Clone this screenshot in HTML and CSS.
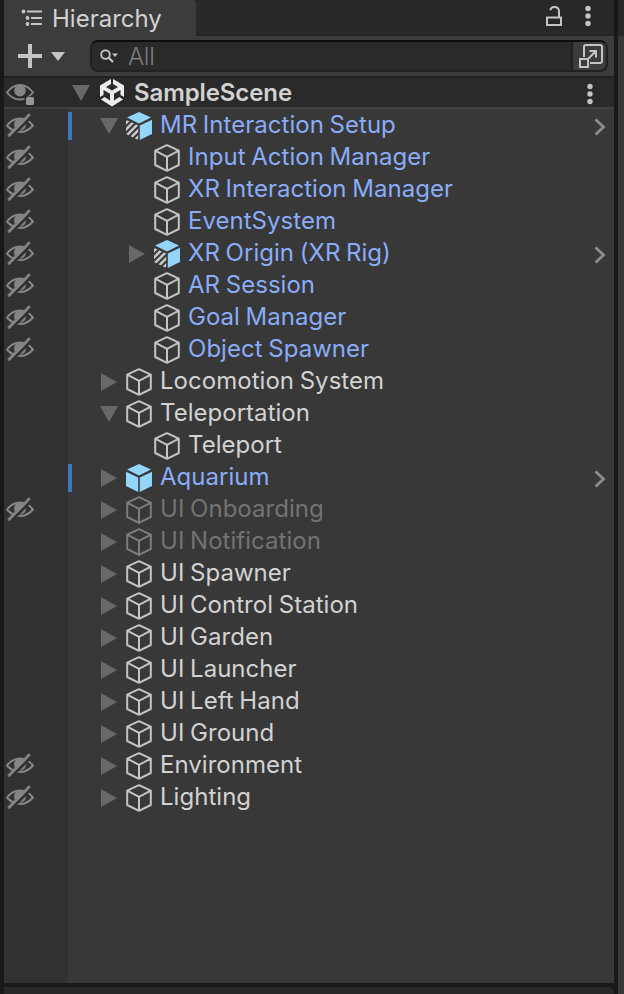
FILE: index.html
```html
<!DOCTYPE html>
<html lang="en">
<head>
<meta charset="utf-8">
<title>Hierarchy</title>
<link rel="stylesheet" href="styles.css">
</head>
<body>
<svg class="defs" aria-hidden="true">
  <symbol id="cube" viewBox="0 0 26 28"><path d="M13 1.2 24.8 6.6V21L13 26.8 1.2 21V6.6zM1.2 6.6 13 12.8 24.8 6.6M13 12.8V26.8" fill="none" stroke="currentColor" stroke-width="2" stroke-linejoin="round"/></symbol>
  <symbol id="prefab" viewBox="0 0 26 28"><path d="M13 0 25 5.5 13 11.4 1 5.5zM0 7.8 12.2 13.6V28L0 22zM26 7.8 13.8 13.6V28L26 22z" fill="#93d5fb"/></symbol>
  <symbol id="variant" viewBox="0 0 26 28"><clipPath id="face"><path d="M0 7.8 12.2 13.6V28L0 22z"/></clipPath><path d="M13 0 25 5.5 13 11.4 1 5.5zM26 7.8 13.8 13.6V28L26 22z" fill="#93d5fb"/><path d="M-2 13 11 0M-2 19.500 18 -.5M-2 26 18 6M-2 32.500 18 12.500M-2 39 18 19" clip-path="url(#face)" fill="none" stroke="#c8c8c8" stroke-width="2.6"/></symbol>
  <symbol id="down" viewBox="0 0 18 16"><path d="M0 0H18L9 16z" fill="#686868"/></symbol>
  <symbol id="right" viewBox="0 0 18 18"><path d="M1 0 17 9 1 18z" fill="#686868"/></symbol>
  <symbol id="hidden" viewBox="0 0 28 24"><path d="M1 12.5Q6.500 5.500 14 5.500T27 12.500Q21.500 19 14 19T1 12.500z" fill="none" stroke="#858585" stroke-width="2"/><circle cx="14" cy="11.500" r="6" fill="#858585"/><path d="M5 24 26 3" stroke="#323232" stroke-width="3"/><path d="M3 22.500 23 2" stroke="#858585" stroke-width="2.700" stroke-linecap="round"/></symbol>
  <symbol id="eye" viewBox="0 0 28 24"><path d="M1 11.500Q6.500 4 14 4T27 11.500Q21.500 18.500 14 18.500T1 11.500z" fill="none" stroke="#858585" stroke-width="1.900"/><circle cx="14" cy="9.700" r="5.800" fill="#858585"/><rect x="18.500" y="15.500" width="10" height="9" fill="#292929"/><rect x="20" y="16" width="8" height="8" rx="1.500" fill="#969696"/></symbol>
  <symbol id="open" viewBox="0 0 12 18"><path d="M1.500 1.500 9.500 9 1.500 16.500" fill="none" stroke="#8d8d8d" stroke-width="2.800"/></symbol>
  <symbol id="dots" viewBox="0 0 6 22"><g fill="#c4c4c4"><circle cx="3" cy="3.500" r="2.700"/><circle cx="3" cy="11" r="2.700"/><circle cx="3" cy="18.500" r="2.700"/></g></symbol>
</svg>
<div class="window">
  <section class="panel">
    <header class="tabs">
      <div class="tab">
        <svg class="list" viewBox="0 0 22 18"><g fill="#c4c4c4"><circle cx="2.500" cy="2.500" r="1.900"/><circle cx="6.500" cy="9" r="1.900"/><circle cx="6.500" cy="15" r="1.900"/><path d="M6 1.500h15v2H6zM10 8h11v2H10zM10 14h11v2H10z"/></g></svg>
        <span>Hierarchy</span>
      </div>
      <svg class="lock" viewBox="0 0 16 20"><path d="M1 11.500H15V19H1zM13 11.500V5.500A4.500 4.500 0 0 0 4.200 4.200" fill="none" stroke="#c4c4c4" stroke-width="2"/></svg>
      <svg class="dots"><use href="#dots"/></svg>
    </header>
    <div class="toolbar">
      <svg class="plus" viewBox="0 0 24 24"><path d="M12 0V24M0 12H24" stroke="#c4c4c4" stroke-width="4"/></svg>
      <svg class="caret" viewBox="0 0 14 9"><path d="M0 0H14L7 9z" fill="#c4c4c4"/></svg>
      <div class="search">
        <svg class="lens" viewBox="0 0 18 14"><circle cx="5.500" cy="5.500" r="4.300" fill="none" stroke="#c4c4c4" stroke-width="1.900"/><path d="M8.500 8.500 13 13" stroke="#c4c4c4" stroke-width="2.200"/><path d="M12 4.500H18L15 8z" fill="#c4c4c4"/></svg>
        <span class="hint">All</span>
        <div class="pick"><svg viewBox="0 0 24 24"><path d="M5 13V3Q5 1 7 1H21Q23 1 23 3V17Q23 19 21 19H11M1 15H9V23H1zM9.500 14.500 17 7M10.500 7H17V13.500" fill="none" stroke="#c4c4c4" stroke-width="2"/></svg></div>
      </div>
    </div>
    <div class="scene">
      <svg class="eye"><use href="#eye"/></svg>
      <svg class="fold"><use href="#down"/></svg>
      <svg class="unity" viewBox="0 0 24 28"><path d="M11 0V5L6 8 12 11.500 18 8 13 5V0L24 6.500V18L20.500 16V11L14 14.800V21.500L19.500 18 23 20.500 12 27.500 1 20.500 4.500 18 10 21.500V14.800L3.500 11V16L0 18V6.500z" fill="#ececec"/></svg>
      <strong>SampleScene</strong>
      <svg class="dots"><use href="#dots"/></svg>
    </div>
    <div class="tree">
      <div class="row blue marked"><div class="vis"><svg><use href="#hidden"/></svg></div><svg class="fold"><use href="#down"/></svg><svg class="icon"><use href="#variant"/></svg><span>MR Interaction Setup</span><svg class="open"><use href="#open"/></svg></div>
      <div class="row blue child"><div class="vis"><svg><use href="#hidden"/></svg></div><i class="fold"></i><svg class="icon"><use href="#cube"/></svg><span>Input Action Manager</span></div>
      <div class="row blue child"><div class="vis"><svg><use href="#hidden"/></svg></div><i class="fold"></i><svg class="icon"><use href="#cube"/></svg><span>XR Interaction Manager</span></div>
      <div class="row blue child"><div class="vis"><svg><use href="#hidden"/></svg></div><i class="fold"></i><svg class="icon"><use href="#cube"/></svg><span>EventSystem</span></div>
      <div class="row blue child"><div class="vis"><svg><use href="#hidden"/></svg></div><svg class="fold"><use href="#right"/></svg><svg class="icon"><use href="#variant"/></svg><span>XR Origin (XR Rig)</span><svg class="open"><use href="#open"/></svg></div>
      <div class="row blue child"><div class="vis"><svg><use href="#hidden"/></svg></div><i class="fold"></i><svg class="icon"><use href="#cube"/></svg><span>AR Session</span></div>
      <div class="row blue child"><div class="vis"><svg><use href="#hidden"/></svg></div><i class="fold"></i><svg class="icon"><use href="#cube"/></svg><span>Goal Manager</span></div>
      <div class="row blue child"><div class="vis"><svg><use href="#hidden"/></svg></div><i class="fold"></i><svg class="icon"><use href="#cube"/></svg><span>Object Spawner</span></div>
      <div class="row"><div class="vis"></div><svg class="fold"><use href="#right"/></svg><svg class="icon"><use href="#cube"/></svg><span>Locomotion System</span></div>
      <div class="row"><div class="vis"></div><svg class="fold"><use href="#down"/></svg><svg class="icon"><use href="#cube"/></svg><span>Teleportation</span></div>
      <div class="row child"><div class="vis"></div><i class="fold"></i><svg class="icon"><use href="#cube"/></svg><span>Teleport</span></div>
      <div class="row blue marked"><div class="vis"></div><svg class="fold"><use href="#right"/></svg><svg class="icon"><use href="#prefab"/></svg><span>Aquarium</span><svg class="open"><use href="#open"/></svg></div>
      <div class="row off"><div class="vis"><svg><use href="#hidden"/></svg></div><svg class="fold"><use href="#right"/></svg><svg class="icon"><use href="#cube"/></svg><span>UI Onboarding</span></div>
      <div class="row off"><div class="vis"></div><svg class="fold"><use href="#right"/></svg><svg class="icon"><use href="#cube"/></svg><span>UI Notification</span></div>
      <div class="row"><div class="vis"></div><svg class="fold"><use href="#right"/></svg><svg class="icon"><use href="#cube"/></svg><span>UI Spawner</span></div>
      <div class="row"><div class="vis"></div><svg class="fold"><use href="#right"/></svg><svg class="icon"><use href="#cube"/></svg><span>UI Control Station</span></div>
      <div class="row"><div class="vis"></div><svg class="fold"><use href="#right"/></svg><svg class="icon"><use href="#cube"/></svg><span>UI Garden</span></div>
      <div class="row"><div class="vis"></div><svg class="fold"><use href="#right"/></svg><svg class="icon"><use href="#cube"/></svg><span>UI Launcher</span></div>
      <div class="row"><div class="vis"></div><svg class="fold"><use href="#right"/></svg><svg class="icon"><use href="#cube"/></svg><span>UI Left Hand</span></div>
      <div class="row"><div class="vis"></div><svg class="fold"><use href="#right"/></svg><svg class="icon"><use href="#cube"/></svg><span>UI Ground</span></div>
      <div class="row"><div class="vis"><svg><use href="#hidden"/></svg></div><svg class="fold"><use href="#right"/></svg><svg class="icon"><use href="#cube"/></svg><span>Environment</span></div>
      <div class="row"><div class="vis"><svg><use href="#hidden"/></svg></div><svg class="fold"><use href="#right"/></svg><svg class="icon"><use href="#cube"/></svg><span>Lighting</span></div>
    </div>
  </section>
  <aside class="neighbor"></aside>
  <div class="below"></div>
</div>
</body>
</html>
```
FILE: styles.css
```css
* { box-sizing: border-box; }
body { margin: 0; background: #191919; color: #d2d2d2; font: 24px/32px Inter, "Liberation Sans", sans-serif; overflow: hidden; }
.defs { position: absolute; width: 0; height: 0; }
svg { display: block; flex: none; }
.window { height: 994px; padding-left: 4px; display: grid; grid-template-columns: 610px 6px; grid-template-rows: 983px 7px; gap: 4px; }
.panel { display: flex; flex-direction: column; background: #383838; }
.below { background: #282828; border-top-right-radius: 6px; }
.neighbor { grid-row: 1 / 3; grid-column: 2; background: linear-gradient(#282828 36px, #383838 36px); }

.tabs { height: 36px; display: flex; align-items: center; background: #282828; border-bottom: 1px solid #222; }
.tab { width: 192px; height: 36px; margin-bottom: -1px; padding-left: 17px; display: flex; align-items: center; gap: 9px; background: #3c3c3c; border-top-right-radius: 4px; }
.tab span { padding-top: 2px; }
.list { width: 22px; height: 18px; }
.lock { width: 16px; height: 20px; margin: 0 23px 4px auto; }
.dots { width: 6px; height: 22px; }
.tabs .dots { margin: 0 23px 4px 0; }

.toolbar { height: 40px; display: flex; align-items: center; background: #3c3c3c; }
.plus { width: 24px; height: 24px; margin-left: 14px; }
.caret { width: 14px; height: 9px; margin-left: 9px; }
.search { width: 518px; height: 32px; margin-left: 25px; display: flex; align-items: center; background: #2a2a2a; border: 2px solid #212121; border-top-color: #0d0d0d; border-radius: 8px; overflow: hidden; }
.lens { width: 18px; height: 14px; margin-left: 8px; }
.hint { margin: 1px 0 0 10px; color: #7d7d7d; font-weight: 300; letter-spacing: -.3px; }
.pick { width: 35px; height: 28px; margin-left: auto; padding: 2px 0 0 6px; background: #3c3c3c; border-left: 2px solid #212121; }
.pick svg { width: 24px; height: 24px; }

.scene { height: 33px; display: flex; align-items: center; background: #2a2a2a; border-top: 2px solid #202020; border-bottom: 2px solid #404040; }
.eye { width: 28px; height: 24px; margin-left: 2px; }
.scene .fold { width: 18px; height: 16px; margin-left: 38px; }
.unity { width: 24px; height: 28px; margin-left: 10px; }
.scene strong { margin-left: 10px; font-weight: 600; letter-spacing: -.1px; }
.scene .dots { margin: 2px 21px 0 auto; }

.tree { flex: 1; padding-top: 1px; background: linear-gradient(90deg, #323232 64px, #383838 64px); }
.row { height: 32px; display: flex; align-items: center; letter-spacing: .03px; word-spacing: -1.1px; }
.vis { width: 64px; height: 28px; padding: 1px 0 0 2px; margin-right: 32px; }
.vis svg { width: 28px; height: 24px; }
.row .fold { width: 18px; height: 18px; margin-right: 8px; }
.row .icon { width: 26px; height: 28px; margin-right: 8px; color: #c4c4c4; }
.row span { margin-top: -2px; }
.child .vis { margin-right: 60px; }
.marked .vis { width: 68px; margin-right: 28px; border-right: 4px solid #3a79bb; }
.blue { color: #8aacf8; }
.off { color: #737373; }
.off .icon { color: #7c7c7c; }
.open { width: 12px; height: 18px; margin: 2px 8px 0 auto; }
```
